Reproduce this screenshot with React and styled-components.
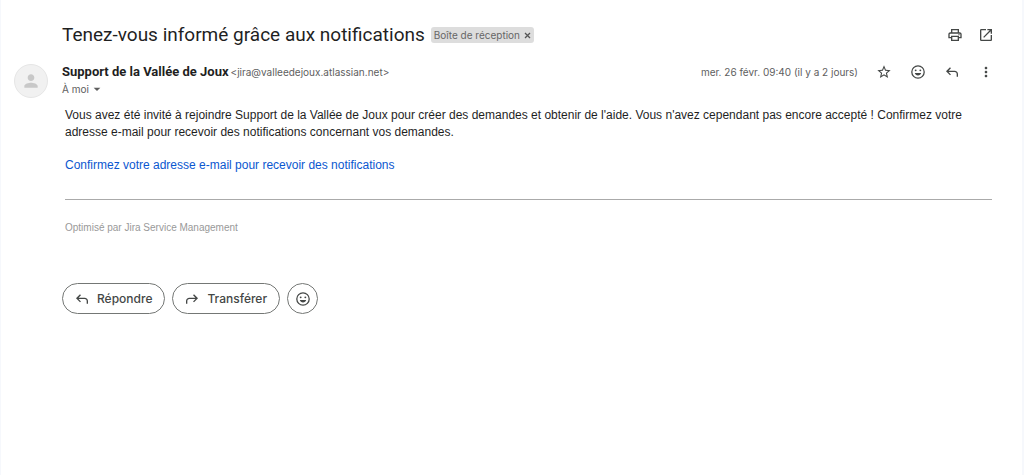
import React from "react";
import styled, { createGlobalStyle } from "styled-components";
import { MdOutlinePrint, MdOpenInNew, MdStarBorder, MdMoreVert, MdArrowDropDown, MdPerson } from "react-icons/md";

const GlobalStyle = createGlobalStyle`
  * { box-sizing: border-box; }
  body { margin: 0; background: #f6f8fc; }
`;

const Page = styled.main`
  min-height: 100vh;
  margin: 0 2px 0 1px;
  padding: 24px 28px 24px 13px;
  background: #fff;
  color: #1f1f1f;
  font-family: "Google Sans", Roboto, "Liberation Sans", sans-serif;
`;

const Columns = styled.div`
  display: grid;
  grid-template-columns: 34px minmax(0, 1fr);
  column-gap: 14px;
`;

const SubjectRow = styled.header`
  grid-column: 2;
  display: flex;
  align-items: center;
  height: 22px;
  gap: 6px;
`;

const Subject = styled.h1`
  margin: 0;
  font-size: 19px;
  line-height: 22px;
  font-weight: 400;
  white-space: nowrap;
`;

const Label = styled.span`
  display: flex;
  align-items: center;
  height: 16px;
  padding: 0 3px;
  gap: 4px;
  border-radius: 3px;
  background: #ddd;
  color: #666;
  font-family: Inter, sans-serif;
  font-size: 10px;
  white-space: nowrap;
`;

const LabelRemove = styled.button`
  padding: 0;
  border: 0;
  background: none;
  color: #555;
  display: flex;
`;

const Actions = styled.div`
  display: flex;
  align-items: center;
  gap: ${(p) => p.$gap}px;
  margin-left: auto;
`;

const IconButton = styled.button`
  display: flex;
  align-items: center;
  justify-content: center;
  width: 16px;
  height: 16px;
  padding: 0;
  border: 0;
  background: none;
  color: #444746;
`;

const Avatar = styled.div`
  display: flex;
  align-items: center;
  justify-content: center;
  width: 34px;
  height: 34px;
  margin-top: 18px;
  border: 1px solid #e6e6e6;
  border-radius: 50%;
  background: #f1f1f1;
  color: #c8c8c8;
`;

const Sender = styled.div`
  padding-top: 17px;
`;

const SenderRow = styled.div`
  display: flex;
  align-items: center;
  height: 18px;
  white-space: nowrap;
`;

const SenderName = styled.h2`
  margin: 0 2px 0 0;
  font-size: 13px;
  line-height: 16px;
  font-weight: 700;
`;

const Meta = styled.span`
  color: #5e5e5e;
  font-family: Inter, sans-serif;
  font-size: 10px;
`;

const Recipient = styled.button`
  display: flex;
  align-items: center;
  height: 16px;
  padding: 0;
  border: 0;
  background: none;
  color: #5e5e5e;
  font-family: Inter, sans-serif;
  font-size: 10px;
`;

const Message = styled.article`
  grid-column: 2;
  padding: 9px 2px 0 3px;
  font-family: Helvetica, "Liberation Sans", Arial, sans-serif;
  font-size: 12px;
  line-height: 17px;
`;

const Paragraph = styled.p`
  margin: 0 0 16px;
`;

const ConfirmLink = styled.a`
  color: #0b57d0;
  text-decoration: none;
`;

const Divider = styled.hr`
  margin: 25px 0 19px;
  border: 0;
  border-top: 1px solid #aaa;
`;

const Footnote = styled.p`
  margin: 0;
  color: #999;
  font-size: 10px;
`;

const ReplyBar = styled.footer`
  grid-column: 2;
  display: flex;
  gap: 7px;
  margin-top: 47px;
`;

const PillButton = styled.button`
  display: flex;
  align-items: center;
  justify-content: center;
  gap: 7px;
  height: 31px;
  width: ${(p) => (p.$round ? "31px" : "auto")};
  padding: 0 ${(p) => (p.$round ? 0 : 12)}px 0 ${(p) => (p.$round ? 0 : 11)}px;
  border: 1px solid #747775;
  border-radius: 16px;
  background: #fff;
  color: #444746;
  font-family: Inter, sans-serif;
  font-size: 12px;
  font-weight: 500;
`;

const Symbol = ({ d, size = 16 }) => (
  <svg width={size} height={size} viewBox="0 -960 960 960" fill="currentColor" aria-hidden="true">
    <path d={d} />
  </svg>
);

const REPLY = "M760-200v-160q0-50-35-85t-85-35H273l144 144-57 56-240-240 240-240 57 56-144 144h367q83 0 141.5 58.5T840-360v160h-80Z";
const FORWARD = "M120-200v-160q0-83 58.5-141.5T320-560h367L543-704l57-56 240 240-240 240-57-56 144-144H320q-50 0-85 35t-35 85v160h-80Z";

const Smile = () => (
  <svg width="16" height="16" viewBox="0 0 24 24" fill="currentColor" aria-hidden="true">
    <circle cx="12" cy="12" r="9.300" fill="none" stroke="currentColor" strokeWidth="1.900" />
    <circle cx="8.500" cy="9.500" r="1.400" />
    <circle cx="15.500" cy="9.500" r="1.400" />
    <path d="M7.200 13.500h9.600c-.6 2.300-2.400 3.800-4.800 3.800s-4.200-1.500-4.800-3.800z" />
  </svg>
);

export default function App() {
  return (
    <>
      <GlobalStyle />
      <Page>
        <Columns>
          <SubjectRow>
            <Subject>Tenez-vous informé grâce aux notifications</Subject>
            <Label>
              Boîte de réception
              <LabelRemove aria-label="Retirer le libellé">
                <svg width="7" height="7" viewBox="0 0 7 7" stroke="currentColor" strokeWidth="1.300" aria-hidden="true">
                  <path d="M1 1l5 5M6 1l-5 5" />
                </svg>
              </LabelRemove>
            </Label>
            <Actions $gap={15}>
              <IconButton aria-label="Imprimer"><MdOutlinePrint size={16} /></IconButton>
              <IconButton aria-label="Ouvrir dans une nouvelle fenêtre"><MdOpenInNew size={16} /></IconButton>
            </Actions>
          </SubjectRow>
          <Avatar><MdPerson size={20} /></Avatar>
          <Sender>
            <SenderRow>
              <SenderName>Support de la Vallée de Joux</SenderName>
              <Meta>&lt;jira@valleedejoux.atlassian.net&gt;</Meta>
              <Actions $gap={18}>
                <Meta as="time">mer. 26 févr. 09:40 (il y a 2 jours)</Meta>
                <IconButton aria-label="Suivre"><MdStarBorder size={16} /></IconButton>
                <IconButton aria-label="Ajouter une réaction"><Smile /></IconButton>
                <IconButton aria-label="Répondre"><Symbol d={REPLY} /></IconButton>
                <IconButton aria-label="Plus"><MdMoreVert size={16} /></IconButton>
              </Actions>
            </SenderRow>
            <Recipient>À moi <MdArrowDropDown size={16} /></Recipient>
          </Sender>
          <Message>
            <Paragraph>
              Vous avez été invité à rejoindre Support de la Vallée de Joux pour créer des demandes et obtenir de l'aide. Vous n'avez cependant pas encore accepté ! Confirmez votre adresse e-mail pour recevoir des notifications concernant vos demandes.
            </Paragraph>
            <Paragraph>
              <ConfirmLink href="#confirmer">Confirmez votre adresse e-mail pour recevoir des notifications</ConfirmLink>
            </Paragraph>
            <Divider />
            <Footnote>Optimisé par Jira Service Management</Footnote>
          </Message>
          <ReplyBar>
            <PillButton><Symbol d={REPLY} />Répondre</PillButton>
            <PillButton><Symbol d={FORWARD} />Transférer</PillButton>
            <PillButton $round aria-label="Ajouter une réaction"><Smile /></PillButton>
          </ReplyBar>
        </Columns>
      </Page>
    </>
  );
}
